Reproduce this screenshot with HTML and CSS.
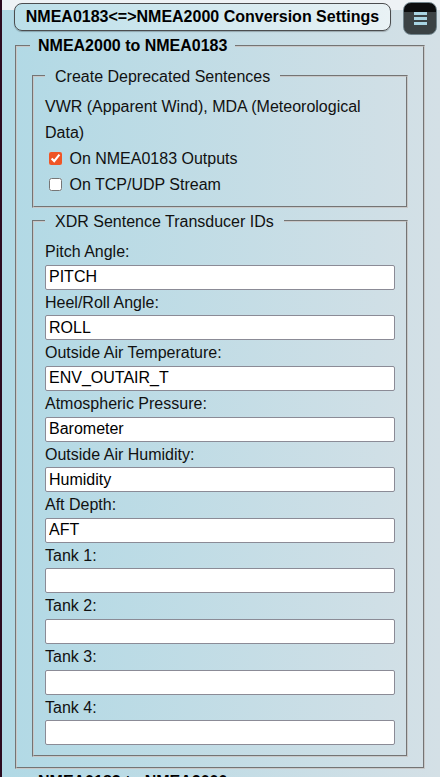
FILE: index.html
```html
<!DOCTYPE html>
<html lang="en">
<head>
<meta charset="utf-8">
<title>NMEA Conversion Settings</title>
<link rel="stylesheet" href="styles.css">
</head>
<body>
<div class="page">
  <header class="topbar">
    <button class="title-btn" type="button">NMEA0183&lt;=&gt;NMEA2000 Conversion Settings</button>
    <button class="menu-btn" type="button" aria-label="Menu">
      <span class="bar"></span><span class="bar"></span><span class="bar"></span>
    </button>
  </header>

  <fieldset class="group">
    <legend class="group-legend">NMEA2000 to NMEA0183</legend>

    <fieldset class="sub sub-first">
      <legend class="sub-legend">Create Deprecated Sentences</legend>
      <div class="text">VWR (Apparent Wind), MDA (Meteorological Data)</div>
      <label class="check check-first"><input type="checkbox" checked> On NMEA0183 Outputs</label>
      <label class="check"><input type="checkbox"> On TCP/UDP Stream</label>
    </fieldset>

    <fieldset class="sub sub-last">
      <legend class="sub-legend">XDR Sentence Transducer IDs</legend>
      <label class="field-label">Pitch Angle:</label>
      <input class="field" type="text" value="PITCH">
      <label class="field-label">Heel/Roll Angle:</label>
      <input class="field" type="text" value="ROLL">
      <label class="field-label">Outside Air Temperature:</label>
      <input class="field" type="text" value="ENV_OUTAIR_T">
      <label class="field-label">Atmospheric Pressure:</label>
      <input class="field" type="text" value="Barometer">
      <label class="field-label">Outside Air Humidity:</label>
      <input class="field" type="text" value="Humidity">
      <label class="field-label">Aft Depth:</label>
      <input class="field" type="text" value="AFT">
      <label class="field-label">Tank 1:</label>
      <input class="field" type="text" value="">
      <label class="field-label">Tank 2:</label>
      <input class="field" type="text" value="">
      <label class="field-label">Tank 3:</label>
      <input class="field" type="text" value="">
      <label class="field-label">Tank 4:</label>
      <input class="field" type="text" value="">
    </fieldset>
  </fieldset>

  <fieldset class="group">
    <legend class="group-legend">NMEA0183 to NMEA2000</legend>
  </fieldset>
</div>
</body>
</html>
```

FILE: styles.css
```css
html, body {
  margin: 0;
  padding: 0;
}

body {
  background: #2c0b20;
  font-family: "Liberation Sans", Arial, sans-serif;
  font-size: 16px;
  line-height: 1.6;
  color: #111;
  overflow: hidden;
}

.page {
  margin-left: 2px;
  min-height: 777px;
  background:
    linear-gradient(#eef2f5 0, #eef2f5 10px, transparent 10px),
    linear-gradient(to right, #b1d9e5, #d4e0e6);
}

.topbar {
  display: flex;
  align-items: flex-start;
  height: 31px;
  padding: 2px 3px 0 12px;
}

.title-btn {
  width: 377px;
  height: 28px;
  margin-top: 1px;
  padding: 0;
  border: 1.5px solid #4b4d4f;
  border-radius: 8px;
  background: linear-gradient(to right, #bbdfe9, #e9f2f5);
  box-shadow: 0 1px 1px rgba(0,0,0,0.25);
  font-family: "Liberation Sans", Arial, sans-serif;
  font-size: 16px;
  font-weight: bold;
  color: #000;
  line-height: 24px;
}

.menu-btn {
  width: 34px;
  height: 33px;
  margin-left: auto;
  padding: 0;
  border: 1px solid #71848c;
  border-radius: 8px;
  background: linear-gradient(#0b0d0e 0, #0b0d0e 9px, #3b4244 9px);
  display: flex;
  flex-direction: column;
  align-items: center;
  justify-content: center;
  gap: 2px;
  position: relative;
  z-index: 1;
}

.menu-btn .bar {
  display: block;
  width: 13px;
  height: 3px;
  background: #a8d4e2;
}

.group {
  margin: 0 15px 0 13px;
  padding: 5px 13px 10px;
  border: 2px groove #c8c8c8;
  min-width: 0;
}

.group-legend {
  padding: 0 8px;
  font-weight: bold;
  color: #000;
}

.sub {
  margin: 0 2px;
  border: 2px groove #c8c8c8;
  min-width: 0;
}

.sub-first {
  padding: 5px 11px 8px;
}

.sub-last {
  margin-top: 1px;
  padding: 5px 11px 10px;
}

.sub-legend {
  padding: 0 10px;
  color: #111;
}

.text {
  color: #111;
}

.check {
  display: block;
  color: #111;
}

.check-first {
  margin-top: 1px;
}

.check input {
  margin: 3px 3px 3px 4px;
  accent-color: #ef5526;
  vertical-align: -1px;
}

.field-label {
  display: block;
  color: #111;
}

.field {
  display: block;
  box-sizing: border-box;
  width: 100%;
  height: 25px;
  margin: 0;
  padding: 1px 3px;
  border: 1px solid #8b8b96;
  border-radius: 2px;
  background: #fff;
  font-family: "Liberation Sans", Arial, sans-serif;
  font-size: 16px;
  color: #000;
}
```
